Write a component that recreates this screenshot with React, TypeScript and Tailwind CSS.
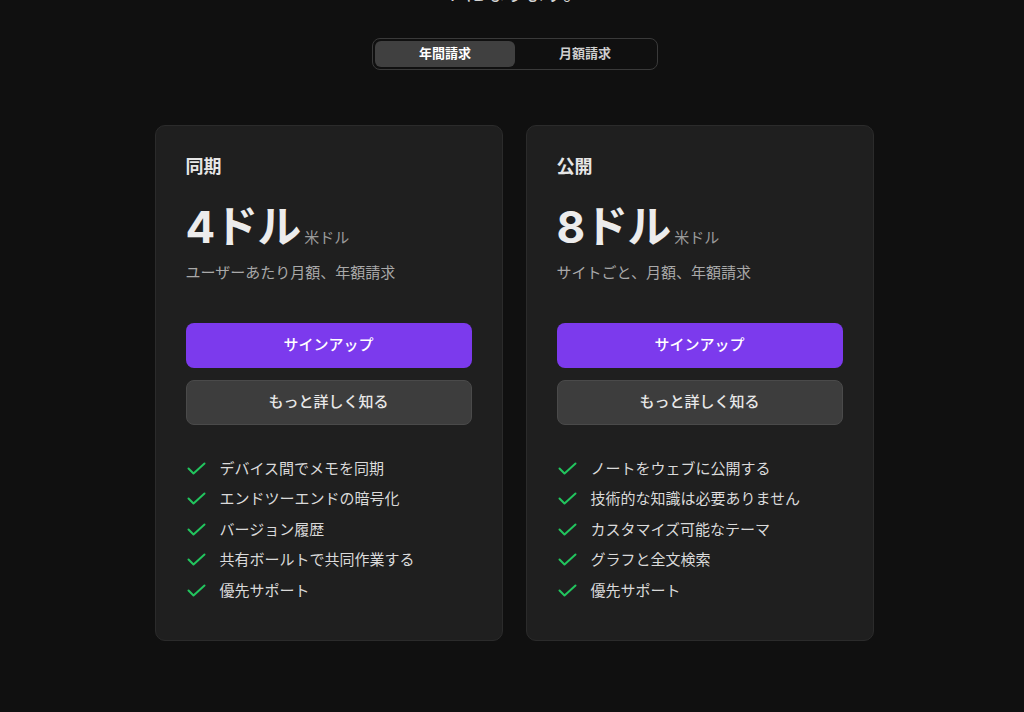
import React from "react";

const font = { fontFamily: 'Inter, "Noto Sans CJK JP", "Noto Sans", sans-serif' };

function Check() {
  return (
    <svg width="20" height="14" viewBox="0 0 20 14" fill="none" className="shrink-0">
      <polyline points="2.5,6.5 7.5,11.5 18.5,1.5" stroke="#22c55e" strokeWidth="2" strokeLinecap="round" strokeLinejoin="round" />
    </svg>
  );
}

type Plan = { title: string; price: string; sub: string; features: string[] };

const plans: Plan[] = [
  {
    title: "同期",
    price: "4ドル",
    sub: "ユーザーあたり月額、年額請求",
    features: ["デバイス間でメモを同期", "エンドツーエンドの暗号化", "バージョン履歴", "共有ボールトで共同作業する", "優先サポート"],
  },
  {
    title: "公開",
    price: "8ドル",
    sub: "サイトごと、月額、年額請求",
    features: ["ノートをウェブに公開する", "技術的な知識は必要ありません", "カスタマイズ可能なテーマ", "グラフと全文検索", "優先サポート"],
  },
];

function Card({ p }: { p: Plan }) {
  return (
    <div className="w-[348px] rounded-[10px] border border-[#2b2b2b] bg-[#1f1f1f] px-[30px] pt-[30px] pb-[38px] flex flex-col">
      <div className="text-[18px] leading-[22px] font-bold text-[#e6e6e6]">{p.title}</div>
      <div className="mt-[27px] flex items-baseline">
        <span className="text-[44px] leading-[44px] font-bold tracking-[-1px] text-[#ececec]">{p.price}</span>
        <span className="ml-[4px] text-[15px] text-[#9b9b9b]">米ドル</span>
      </div>
      <div className="mt-[12px] text-[15px] leading-[22px] text-[#a9a9a9]">{p.sub}</div>
      <div className="mt-[39px] flex flex-col gap-[12px]">
        <div className="h-[45px] rounded-[8px] bg-[#7c3aed] flex items-center justify-center text-[15px] font-medium text-white">サインアップ</div>
        <div className="h-[45px] rounded-[8px] bg-[#3d3d3d] border border-[#4a4a4a] flex items-center justify-center text-[15px] font-medium text-[#e8e8e8]">もっと詳しく知る</div>
      </div>
      <div className="mt-[33px] flex flex-col gap-[8.5px]">
        {p.features.map((f) => (
          <div key={f} className="flex items-center h-[22px] gap-[14px]">
            <Check />
            <span className="text-[15px] leading-[22px] text-[#dadada]">{f}</span>
          </div>
        ))}
      </div>
    </div>
  );
}

export default function App() {
  return (
    <div className="min-h-[712px] w-full bg-[#101010] overflow-hidden" style={font}>
      <div className="flex flex-col items-center pl-[4px]">
        <p className="-mt-[20px] text-[20px] leading-[28px] text-[#d4d4d4] text-center">トになります。</p>
        <div className="mt-[30px] ml-[2px] w-[286px] h-[32px] rounded-[8px] border border-[#3a3a3a] p-[2px] flex">
          <div className="flex-1 rounded-[6px] bg-[#404040] flex items-center justify-center text-[13px] font-bold text-white">年間請求</div>
          <div className="flex-1 rounded-[6px] flex items-center justify-center text-[13px] font-bold text-[#cfcfcf]">月額請求</div>
        </div>
        <div className="mt-[55px] flex gap-[23px]">
          {plans.map((p) => (
            <Card key={p.title} p={p} />
          ))}
        </div>
      </div>
    </div>
  );
}
